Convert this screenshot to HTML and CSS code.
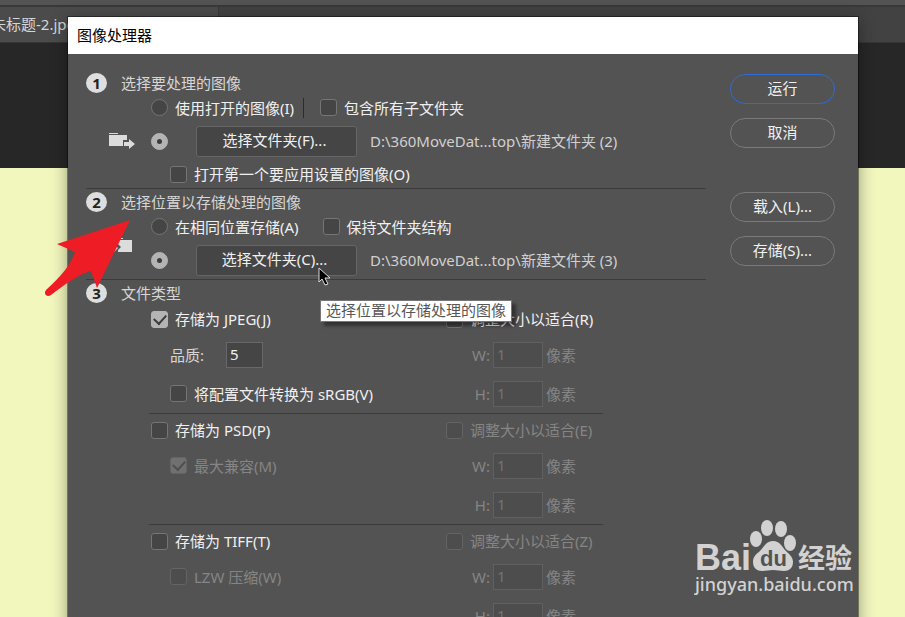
FILE: index.html
```html
<!DOCTYPE html>
<html lang="zh-CN">
<head>
    <meta charset="UTF-8">
    <meta name="viewport" content="width=device-width, initial-scale=1.0">
    <title>图像处理器</title>
    <link rel="stylesheet" href="styles.css">
</head>
<body>
    <div class="workspace">
        <div class="options-bar"></div>
        <div class="tabs"><div class="tab">未标题-2.jpg</div></div>
        <div class="backdrop"></div>
    </div>

    <main class="dialog">
        <h1 class="title">图像处理器</h1>
        <div class="content">
            <form class="steps">
                <!-- 1 -->
                <section class="step">
                    <h2><span class="num">1</span>选择要处理的图像</h2>
                    <div class="source">
                        <svg class="folder" width="26" height="18" viewBox="0 0 26 18">
                            <path fill="#dcdcdc" d="M0 1h9v1H0zM0 3h18v5h-4v6H0zM15 10h5V7l6 5-6 5v-3h-5z"/>
                        </svg>
                        <div class="rows">
                            <div class="row">
                                <label><input type="radio" name="src">使用打开的图像(I)</label>
                                <span class="divider"></span>
                                <label><input type="checkbox">包含所有子文件夹</label>
                            </div>
                            <div class="row pick">
                                <input type="radio" name="src" aria-label="选择文件夹" checked>
                                <button type="button" class="choose">选择文件夹(F)...</button>
                                <span class="path">D:\360MoveDat...top\新建文件夹 (2)</span>
                            </div>
                            <div class="row sub short">
                                <label><input type="checkbox">打开第一个要应用设置的图像(O)</label>
                            </div>
                        </div>
                    </div>
                </section>

                <!-- 2 -->
                <section class="step">
                    <h2><span class="num">2</span>选择位置以存储处理的图像</h2>
                    <div class="source">
                        <svg class="folder" width="26" height="18" viewBox="0 0 26 18">
                            <path fill="#dcdcdc" d="M5 1h9v1H5zM5 3h18v12H9v-2l3-3-3-3v-1H5zM0 10h4V7l5 4-5 5v-3H0z"/>
                        </svg>
                        <div class="rows">
                            <div class="row wide">
                                <label><input type="radio" name="dest">在相同位置存储(A)</label>
                                <label><input type="checkbox">保持文件夹结构</label>
                            </div>
                            <div class="row pick">
                                <input type="radio" name="dest" aria-label="选择文件夹" checked>
                                <button type="button" class="choose">选择文件夹(C)...</button>
                                <span class="path">D:\360MoveDat...top\新建文件夹 (3)</span>
                            </div>
                        </div>
                    </div>
                </section>

                <!-- 3 -->
                <section class="step">
                    <h2><span class="num">3</span>文件类型</h2>
                    <div class="format">
                        <label><input type="checkbox" checked>存储为 JPEG(J)</label>
                        <label class="fit"><input type="checkbox">调整大小以适合(R)</label>
                        <label class="sub quality">品质: <input type="text" value="5"></label>
                        <label class="size off"><span>W:</span><input type="text" value="1" disabled>像素</label>
                        <label class="sub"><input type="checkbox">将配置文件转换为 sRGB(V)</label>
                        <label class="size off"><span>H:</span><input type="text" value="1" disabled>像素</label>
                    </div>
                    <div class="format">
                        <label><input type="checkbox">存储为 PSD(P)</label>
                        <label class="fit off"><input type="checkbox" disabled>调整大小以适合(E)</label>
                        <label class="sub off"><input type="checkbox" checked disabled>最大兼容(M)</label>
                        <label class="size off"><span>W:</span><input type="text" value="1" disabled>像素</label>
                        <label class="size off"><span>H:</span><input type="text" value="1" disabled>像素</label>
                    </div>
                    <div class="format">
                        <label><input type="checkbox">存储为 TIFF(T)</label>
                        <label class="fit off"><input type="checkbox" disabled>调整大小以适合(Z)</label>
                        <label class="sub off"><input type="checkbox" disabled>LZW 压缩(W)</label>
                        <label class="size off"><span>W:</span><input type="text" value="1" disabled>像素</label>
                        <label class="size off"><span>H:</span><input type="text" value="1" disabled>像素</label>
                    </div>
                </section>
            </form>

            <div class="actions">
                <button type="button" class="primary">运行</button>
                <button type="button">取消</button>
                <button type="button" class="apart">载入(L)...</button>
                <button type="button">存储(S)...</button>
            </div>
        </div>
    </main>

    <div class="tooltip" role="tooltip">选择位置以存储处理的图像</div>

    <svg class="cursor" width="14" height="20" viewBox="0 0 14 20">
        <path fill="#000" stroke="#ddd" d="M1 1v14l3-3 3 6 3-1-3-6h5z"/>
    </svg>

    <svg class="arrow" width="90" height="80" viewBox="0 0 90 80">
        <path fill="#ee1c24" d="M87 2L14 26l18 8C29 44 20 57 3 72c-3 4 1 8 5 5 13-10 28-21 40-24l6 17z"/>
    </svg>

    <svg class="watermark" width="166" height="84" viewBox="0 0 166 84">
        <g fill="#d2d2d2">
            <text class="wm-bai" x="1" y="52">Bai</text>
            <ellipse cx="62" cy="21" rx="6" ry="8"/>
            <ellipse cx="73" cy="10" rx="6" ry="8"/>
            <ellipse cx="87" cy="11" rx="6" ry="8"/>
            <ellipse cx="96" cy="25" rx="6" ry="8"/>
            <path d="M79 23c-7 0-9 6-13 10-4 3-7 6-7 11 0 6 4 9 9 9 4 0 7-1 11-1s7 1 11 1c5 0 9-3 9-9 0-5-4-8-7-11-4-4-6-10-13-10z"/>
            <text class="wm-cn" x="104" y="50">经验</text>
            <text class="wm-url" x="1" y="73">jingyan.baidu.com</text>
        </g>
        <text class="wm-du" x="66" y="48">du</text>
    </svg>
</body>
</html>
```

FILE: styles.css
```css
* {
    box-sizing: border-box;
}
body {
    margin: 0;
    height: 100vh;
    overflow: hidden;
    position: relative;
    background-color: #f2f7be;
    color: #f0f0f0;
    font: 15px/20px "Noto Sans", "Noto Sans CJK SC", sans-serif;
}
input, button {
    font: inherit;
    color: inherit;
    margin: 0;
}

/* document window behind the dialog */
.options-bar {
    height: 7px;
    background-color: #535353;
    border-bottom: 2px solid #383838;
}
.tabs {
    display: flex;
    height: 36px;
    background-color: #424242;
    border-bottom: 1px solid #353535;
}
.tab {
    width: 219px;
    background-color: #4b4b4b;
    border-right: 1px solid #383838;
    line-height: 35px;
    text-indent: -9px;
    color: #d6d6d6;
}
.backdrop {
    height: 125px;
    background-color: #272727;
}

/* dialog */
.dialog {
    position: absolute;
    top: 17px;
    left: 68px;
    right: 47px;
    background-color: #535353;
    box-shadow: 0 0 0 1px rgba(0, 0, 0, 0.4), 0 4px 16px rgba(0, 0, 0, 0.4);
}
.title {
    margin: 0;
    padding: 0 9px;
    background-color: #fff;
    color: #000;
    font-size: 15px;
    font-weight: normal;
    line-height: 37px;
}
.content {
    display: flex;
    gap: 24px;
    padding: 16px 23px 20px 18px;
}
.steps {
    flex: 1;
}
.step {
    padding-top: 2px;
    border-bottom: 1px solid #3c3c3c;
}
.step:last-child {
    border-bottom: none;
}
h2 {
    display: flex;
    align-items: center;
    gap: 14px;
    height: 21px;
    margin: 0;
    font-size: 15px;
    font-weight: normal;
    color: #d6d6d6;
}
.num {
    width: 21px;
    height: 20px;
    border-radius: 50%;
    background-color: #dedede;
    color: #222;
    font-weight: bold;
    text-align: center;
}
.source {
    display: flex;
    align-items: center;
    gap: 16px;
    padding-left: 23px;
}
.row, label {
    display: flex;
    align-items: center;
    white-space: nowrap;
}
.row {
    height: 29px;
    gap: 9px;
}
.row.wide {
    gap: 24px;
}
.row.pick {
    height: 38px;
    gap: 13px;
}
.row.short {
    height: 28px;
}
.sub {
    padding-left: 19px;
}
label {
    gap: 7px;
}
.divider {
    width: 1px;
    height: 20px;
    margin-right: 7px;
    background-color: #2c2c2c;
}
.path {
    color: #d0d0d0;
}

/* radios and check boxes */
input[type="radio"],
input[type="checkbox"] {
    appearance: none;
    display: grid;
    place-items: center;
    flex: none;
    width: 17px;
    height: 17px;
    background-color: #454545;
    border: 1px solid #757575;
    border-radius: 3px;
}
input[type="radio"] {
    border-radius: 50%;
}
input[type="radio"]:checked,
input[type="checkbox"]:checked {
    background-color: #b4b4b4;
    border-color: #b4b4b4;
}
input[type="radio"]:checked::after {
    content: "";
    width: 5px;
    height: 5px;
    border-radius: 50%;
    background-color: #3c3c3c;
}
input[type="checkbox"]:checked::after {
    content: "";
    width: 6px;
    height: 10px;
    margin-bottom: 3px;
    border: solid #3c3c3c;
    border-width: 0 2px 2px 0;
    transform: rotate(42deg);
}
input[type="checkbox"]:disabled {
    background-color: #4d4d4d;
    border-color: #646464;
}
input[type="checkbox"]:checked:disabled {
    background-color: #707070;
}
input[type="checkbox"]:checked:disabled::after {
    border-color: #4f4f4f;
}
input[type="text"] {
    width: 37px;
    height: 26px;
    padding: 0 3px 2px;
    background-color: #454545;
    border: 1px solid #686868;
    border-radius: 0;
}
input[type="text"]:disabled {
    background-color: #4d4d4d;
    border-color: #606060;
    color: #737373;
}

/* one block per file type */
.format {
    display: grid;
    grid-template-columns: 295px 1fr;
    grid-template-rows: 32px 39px 39px;
    margin: 0 103px 0 63px;
    padding-left: 2px;
    border-bottom: 1px solid #3c3c3c;
}
.format:last-child {
    border-bottom: none;
}
.quality {
    gap: 22px;
    color: #d6d6d6;
}
.quality input {
    color: #f0f0f0;
}
.size {
    grid-column: 2;
    gap: 3px;
}
.size span {
    width: 44px;
    text-align: right;
}
.size input[type="text"] {
    width: 50px;
}
.off {
    color: #858585;
}

/* buttons */
.choose {
    width: 161px;
    height: 31px;
    margin-left: 15px;
    padding: 0 4px 2px 0;
    background-color: #454545;
    border: 1px solid #666;
    border-radius: 3px;
}
.actions {
    display: flex;
    flex-direction: column;
    gap: 14px;
    width: 105px;
    padding-top: 4px;
}
.actions button {
    height: 30px;
    padding: 0 0 2px;
    background-color: transparent;
    border: 1px solid #7a7a7a;
    border-radius: 15px;
}
.actions .primary {
    border: 1px solid #2f6bd6;
}
.actions .apart {
    margin-top: 30px;
}

/* things drawn over the dialog */
.tooltip {
    position: absolute;
    top: 300px;
    left: 320px;
    padding: 0 5px 1px;
    background-color: #fff;
    border: 1px solid #767676;
    box-shadow: 4px 4px 3px rgba(0, 0, 0, 0.4);
    color: #575757;
    line-height: 19px;
}
.cursor {
    position: absolute;
    top: 267px;
    left: 318px;
}
.arrow {
    position: absolute;
    top: 218px;
    left: 43px;
}
.watermark {
    position: absolute;
    right: 45px;
    bottom: 15px;
}
.wm-bai {
    font: bold 36px "Liberation Sans", sans-serif;
}
.wm-du {
    font: bold 22px "Liberation Sans", sans-serif;
    fill: #535353;
}
.wm-cn {
    font: bold 27px "Noto Sans CJK SC", sans-serif;
}
.wm-url {
    font: 500 18px "Noto Sans", sans-serif;
}
```
